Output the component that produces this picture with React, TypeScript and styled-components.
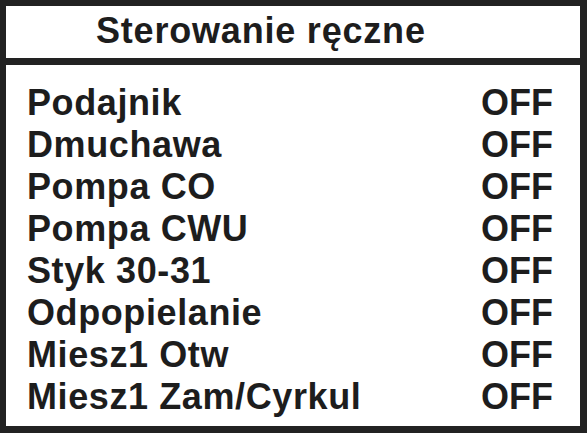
import React from "react";
import styled, { createGlobalStyle } from "styled-components";

const GlobalStyle = createGlobalStyle`
  html, body {
    margin: 0;
    padding: 0;
    background: #ffffff;
  }
  body {
    font-family: "Liberation Sans", Arial, sans-serif;
  }
`;

const Screen = styled.div`
  box-sizing: border-box;
  width: 587px;
  height: 433px;
  display: flex;
  flex-direction: column;
  background: #ffffff;
  border-style: solid;
  border-color: #222222;
  border-width: 6px 7px 7px 6px;
  color: #1d1d1d;
  font-family: "Liberation Sans", Arial, sans-serif;
  font-weight: 700;
`;

const Header = styled.div`
  height: 52px;
  line-height: 49px;
  padding-left: 90px;
  font-size: 36px;
  letter-spacing: 0.8px;
  border-bottom: 7px solid #222222;
  white-space: nowrap;
`;

const List = styled.div`
  display: flex;
  flex-direction: column;
  padding: 17px 27px 0 21px;
`;

const Row = styled.div`
  display: flex;
  justify-content: space-between;
  height: 42px;
  line-height: 42px;
  font-size: 36px;
  letter-spacing: 0.6px;
  white-space: nowrap;
`;

const Label = styled.span``;

const State = styled.span`
  letter-spacing: 0;
`;

const outputs = [
  "Podajnik",
  "Dmuchawa",
  "Pompa CO",
  "Pompa CWU",
  "Styk 30-31",
  "Odpopielanie",
  "Miesz1 Otw",
  "Miesz1 Zam/Cyrkul",
];

export default function App() {
  return (
    <>
      <GlobalStyle />
      <Screen>
        <Header>Sterowanie ręczne</Header>
        <List>
          {outputs.map((name) => (
            <Row key={name}>
              <Label>{name}</Label>
              <State>OFF</State>
            </Row>
          ))}
        </List>
      </Screen>
    </>
  );
}
